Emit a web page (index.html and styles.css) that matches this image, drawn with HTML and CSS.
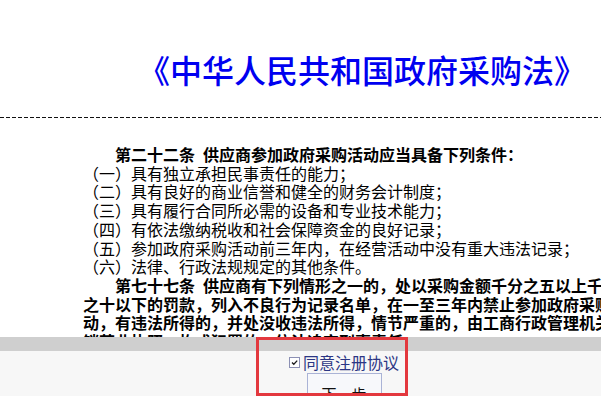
FILE: index.html
```html
<!DOCTYPE html>
<html lang="zh-CN">

<head>
    <meta charset="UTF-8">
    <meta name="viewport" content="width=device-width" />
    <title>供应商注册协议</title>
    <link rel="stylesheet" href="styles.css">
</head>
<body>

    <div id="page">
        <h1 class="law-title">《中华人民共和国政府采购法》</h1>
        <div class="divider"></div>

        <div class="law-text">
            <p class="article">第二十二条&ensp;供应商参加政府采购活动应当具备下列条件：</p>
            <p>（一）具有独立承担民事责任的能力；</p>
            <p>（二）具有良好的商业信誉和健全的财务会计制度；</p>
            <p>（三）具有履行合同所必需的设备和专业技术能力；</p>
            <p>（四）有依法缴纳税收和社会保障资金的良好记录；</p>
            <p>（五）参加政府采购活动前三年内，在经营活动中没有重大违法记录；</p>
            <p>（六）法律、行政法规规定的其他条件。</p>
            <p class="article">第七十七条&ensp;供应商有下列情形之一的，处以采购金额千分之五以上千分之十以下的罚款，列入不良行为记录名单，在一至三年内禁止参加政府采购活动，有违法所得的，并处没收违法所得，情节严重的，由工商行政管理机关吊销营业执照，构成犯罪的，依法追究刑事责任：</p>
        </div>
    </div>

    <div id="agree-bar">
        <div class="strip"></div>
        <div class="agree-panel">
            <label class="agree">
                <span class="checkbox">
                    <svg width="11" height="11" viewBox="0 0 11 11">
                        <rect x="0.5" y="0.5" width="10" height="10" fill="#fff" stroke="#8c90b4" />
                        <path d="M3 5.5 L4.8 7.3 L8.2 3.6" fill="none" stroke="#1c1c1c" stroke-width="1.3" />
                    </svg>
                </span>
                同意注册协议
            </label>
            <button class="next" type="button">下一步</button>
        </div>
    </div>

    <div class="highlight"></div>

</body>
</html>
```

FILE: styles.css
```css
html {
    font-family: "Noto Sans CJK SC", sans-serif;
    box-sizing: border-box;
}

*,
*:before,
*:after {
    box-sizing: inherit;
}

body {
    margin: 0;
    width: 100vw;
    height: 100dvh;
    overflow: hidden;
    background-color: white;
}

#page {
    padding-top: 53px;
}

.law-title {
    margin: 0;
    padding-left: 138px;
    font-size: 32px;
    line-height: 32px;
    font-weight: 500;
    color: #0000f0;
    white-space: nowrap;
}

.divider {
    margin-top: 32px;
    height: 1px;
    background: repeating-linear-gradient(90deg, #111 0 4px, transparent 4px 6px);
}

.law-text {
    margin-top: 27px;
    margin-left: 83px;
    width: 544px;
    font-size: 16px;
    line-height: 18.7px;
    color: #000;
}

.law-text p {
    margin: 0;
}

.law-text .article {
    text-indent: 2em;
    font-weight: bold;
}

#agree-bar {
    position: fixed;
    top: 337px;
    left: 0;
    right: 0;
    height: 80px;
    background-color: #f7f7f7;
}

.strip {
    height: 14px;
    background-color: #cfcfcf;
}

.agree-panel {
    display: flex;
    flex-direction: column;
    align-items: center;
    padding-top: 1px;
    padding-left: 87px;
}

.agree {
    display: flex;
    align-items: center;
    gap: 3px;
    height: 20px;
    font-size: 16px;
    color: #2c3684;
}

.checkbox {
    display: flex;
}

.next {
    margin-top: 1px;
    width: 75px;
    padding: 10px 0;
    border: 1px solid #aab3d6;
    background-color: #f7f8fb;
    font-family: "Noto Sans CJK SC", sans-serif;
    font-size: 15px;
    line-height: 20px;
    color: #111;
}

.highlight {
    position: fixed;
    top: 337px;
    left: 256px;
    width: 152px;
    height: 59px;
    border: 3px solid #e3383e;
}
```
